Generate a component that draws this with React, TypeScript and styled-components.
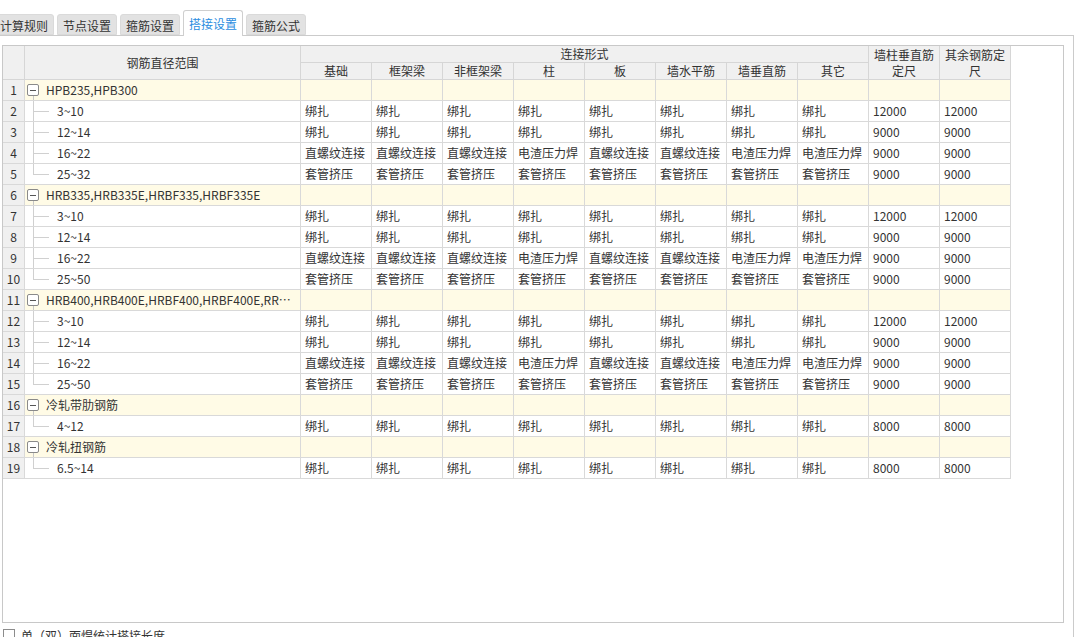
import React from "react";
import styled, { createGlobalStyle } from "styled-components";

const GlobalStyle = createGlobalStyle`
  html, body {
    margin: 0;
    padding: 0;
    background: #ffffff;
    overflow: hidden;
  }
  body {
    font-family: "Noto Sans CJK SC", "Microsoft YaHei", sans-serif;
    font-size: 12px;
    color: #333333;
  }
`;

const tabs = ["计算规则", "节点设置", "箍筋设置", "搭接设置", "箍筋公式"];
const activeTab = "搭接设置";

const subHeads = ["基础", "框架梁", "非框架梁", "柱", "板", "墙水平筋", "墙垂直筋", "其它"];

const BIND = Array(8).fill("绑扎");
const SLEEVE = Array(8).fill("套管挤压");
const MIXED = [
  "直螺纹连接",
  "直螺纹连接",
  "直螺纹连接",
  "电渣压力焊",
  "直螺纹连接",
  "直螺纹连接",
  "电渣压力焊",
  "电渣压力焊",
];

type Child = { range: string; types: string[]; wall: string; other: string };
type Group = { name: string; children: Child[] };

const standard = (last: string): Child[] => [
  { range: "3~10", types: BIND, wall: "12000", other: "12000" },
  { range: "12~14", types: BIND, wall: "9000", other: "9000" },
  { range: "16~22", types: MIXED, wall: "9000", other: "9000" },
  { range: last, types: SLEEVE, wall: "9000", other: "9000" },
];

const groups: Group[] = [
  { name: "HPB235,HPB300", children: standard("25~32") },
  { name: "HRB335,HRB335E,HRBF335,HRBF335E", children: standard("25~50") },
  {
    name: "HRB400,HRB400E,HRBF400,HRBF400E,RRB400,HRB500",
    children: standard("25~50"),
  },
  {
    name: "冷轧带肋钢筋",
    children: [{ range: "4~12", types: BIND, wall: "8000", other: "8000" }],
  },
  {
    name: "冷轧扭钢筋",
    children: [{ range: "6.5~14", types: BIND, wall: "8000", other: "8000" }],
  },
];

const COLS = "22px 276px repeat(10, 71px)";

const App = () => {
  let n = 0;
  const rows: React.ReactNode[] = [];
  groups.forEach((g) => {
    n += 1;
    rows.push(
      <Row key={`g${n}`}>
        <NumCell>{n}</NumCell>
        <NameCell $group>
          <svg width="16" height="20" viewBox="0 0 16 20">
            <rect x="2.5" y="4.5" width="11" height="11" rx="1.5" fill="#fff" stroke="#8a8a8a" />
            <line x1="5" y1="10.5" x2="11" y2="10.5" stroke="#555" />
            <line x1="8.5" y1="16" x2="8.5" y2="20" stroke="#c8c8c8" />
          </svg>
          <Label $indent={5}>{g.name}</Label>
        </NameCell>
        {Array.from({ length: 10 }).map((_, i) => (
          <Cell key={i} $group />
        ))}
      </Row>,
    );
    g.children.forEach((c, ci) => {
      n += 1;
      const last = ci === g.children.length - 1;
      rows.push(
        <Row key={`c${n}`}>
          <NumCell>{n}</NumCell>
          <NameCell>
            <svg width="24" height="20" viewBox="0 0 24 20">
              <line x1="8.5" y1="0" x2="8.5" y2={last ? 10.5 : 21} stroke="#d0d0d0" />
              <line x1="8" y1="10.5" x2="24" y2="10.5" stroke="#d0d0d0" />
            </svg>
            <Label $indent={8}>{c.range}</Label>
          </NameCell>
          {c.types.map((t, i) => (
            <Cell key={i}>{t}</Cell>
          ))}
          <Cell>{c.wall}</Cell>
          <Cell>{c.other}</Cell>
        </Row>,
      );
    });
  });

  return (
    <>
      <GlobalStyle />
      <Page>
        <TabBar>
          {tabs.map((t) => (
            <Tab key={t} $active={t === activeTab}>
              {t}
            </Tab>
          ))}
        </TabBar>
        <Panel>
          <GridBox>
            <Header>
              <HeadCell style={{ gridRow: "1 / 3" }} />
              <HeadCell style={{ gridRow: "1 / 3" }}>钢筋直径范围</HeadCell>
              <HeadCell style={{ gridColumn: "3 / 11" }}>连接形式</HeadCell>
              <HeadCell style={{ gridRow: "1 / 3", gridColumn: "11" }} $wrap>
                墙柱垂直筋定尺
              </HeadCell>
              <HeadCell style={{ gridRow: "1 / 3", gridColumn: "12" }} $wrap>
                其余钢筋定尺
              </HeadCell>
              {subHeads.map((h) => (
                <HeadCell key={h}>{h}</HeadCell>
              ))}
            </Header>
            {rows}
          </GridBox>
          <CheckRow>
            <CheckBox />
            <span>单（双）面焊统计搭接长度</span>
          </CheckRow>
        </Panel>
      </Page>
    </>
  );
};

const Page = styled.div`
  width: 1082px;
  height: 637px;
  overflow: hidden;
`;

const TabBar = styled.div`
  display: flex;
  align-items: flex-end;
  gap: 3px;
  height: 25px;
  padding-top: 10px;
  margin-left: -6px;
  position: relative;
  z-index: 1;
`;

const Tab = styled.div<{ $active?: boolean }>`
  box-sizing: border-box;
  width: 60px;
  height: ${(p) => (p.$active ? "26px" : "21px")};
  margin-bottom: ${(p) => (p.$active ? "-1px" : "0")};
  display: flex;
  align-items: center;
  justify-content: center;
  padding-top: ${(p) => (p.$active ? "0" : "1px")};
  background: ${(p) => (p.$active ? "#ffffff" : "#e2e2e2")};
  border: 1px solid ${(p) => (p.$active ? "#cfcfcf" : "#dadada")};
  border-bottom: ${(p) => (p.$active ? "none" : "1px solid #dadada")};
  border-radius: 3px 3px 0 0;
  color: ${(p) => (p.$active ? "#2b8de0" : "#333333")};
  font-size: 12px;
`;

const Panel = styled.div`
  box-sizing: border-box;
  width: 1075px;
  height: 640px;
  margin-left: -1px;
  border: 1px solid #cbcbcb;
  padding: 9px 9px 0 2px;
`;

const GridBox = styled.div`
  box-sizing: border-box;
  height: 578px;
  border: 1px solid #c8c8c8;
  overflow: hidden;
`;

const Header = styled.div`
  display: grid;
  grid-template-columns: ${COLS};
  grid-template-rows: 17px 17px;
`;

const HeadCell = styled.div<{ $wrap?: boolean }>`
  box-sizing: border-box;
  background: #f0f0f0;
  border-right: 1px solid #d6d6d6;
  border-bottom: 1px solid #d6d6d6;
  display: flex;
  align-items: center;
  justify-content: center;
  text-align: center;
  line-height: 16px;
  padding: ${(p) => (p.$wrap ? "0 1px" : "0")};
  word-break: break-all;
`;

const Row = styled.div`
  display: grid;
  grid-template-columns: ${COLS};
  height: 21px;
`;

const Cell = styled.div<{ $group?: boolean }>`
  box-sizing: border-box;
  border-right: 1px solid #d9d9d9;
  border-bottom: 1px solid #d9d9d9;
  background: ${(p) => (p.$group ? "#fffbe6" : "#ffffff")};
  padding-left: 4px;
  line-height: 20px;
  white-space: nowrap;
  overflow: hidden;
`;

const NumCell = styled(Cell)`
  background: #f0f0f0;
  padding-left: 0;
  text-align: center;
`;

const NameCell = styled(Cell)`
  display: flex;
  align-items: flex-start;
  padding-left: 0;
  svg {
    flex: none;
    display: block;
  }
`;

const Label = styled.span<{ $indent: number }>`
  margin-left: ${(p) => p.$indent}px;
  padding-right: 6px;
  overflow: hidden;
  text-overflow: ellipsis;
  white-space: nowrap;
  min-width: 0;
`;

const CheckRow = styled.div`
  display: flex;
  align-items: flex-start;
  gap: 6px;
  margin-top: 6px;
  padding-left: 1px;
  line-height: 14px;
  font-size: 12px;
`;

const CheckBox = styled.span`
  box-sizing: border-box;
  width: 12px;
  height: 12px;
  border: 1px solid #8c8c8c;
  background: #fff;
`;

export default App;
